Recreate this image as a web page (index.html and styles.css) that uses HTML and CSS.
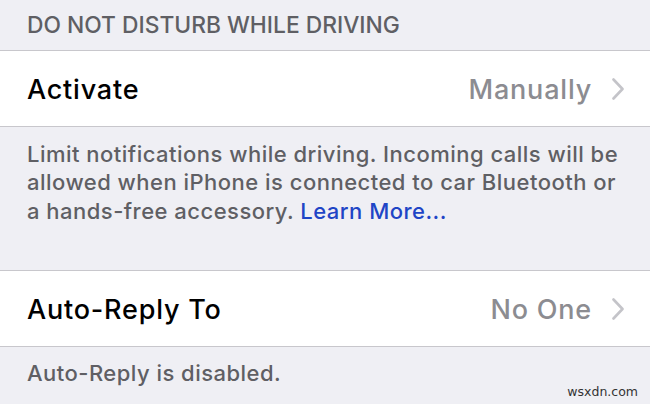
FILE: index.html
```html
<!DOCTYPE html>
<html>
<head>
<meta charset="utf-8">
<link rel="stylesheet" href="styles.css">
</head>
<body>
<div class="page">
  <div class="section-header">DO NOT DISTURB WHILE DRIVING</div>
  <div class="group">
    <div class="row">
      <span class="label">Activate</span>
      <span class="value">Manually</span>
      <svg class="chev" width="12" height="22" viewBox="0 0 12 22"><path d="M1.5 1.5 L10.5 11 L1.5 20.5" fill="none" stroke="#c4c4c9" stroke-width="2.6" stroke-linecap="round" stroke-linejoin="round"/></svg>
    </div>
  </div>
  <div class="desc">Limit notifications while driving. Incoming calls will be allowed when iPhone is connected to car Bluetooth or a hands-free accessory. <span class="link">Learn More...</span></div>
  <div class="group">
    <div class="row">
      <span class="label">Auto-Reply To</span>
      <span class="value">No One</span>
      <svg class="chev" width="12" height="22" viewBox="0 0 12 22"><path d="M1.5 1.5 L10.5 11 L1.5 20.5" fill="none" stroke="#c4c4c9" stroke-width="2.6" stroke-linecap="round" stroke-linejoin="round"/></svg>
    </div>
  </div>
  <div class="footer-note">Auto-Reply is disabled.</div>
  <div class="watermark">wsxdn.com</div>
</div>
</body>
</html>
```

FILE: styles.css
```css
html, body {
  margin: 0;
  padding: 0;
}
body {
  background: #efeff4;
  font-family: Inter, "Noto Sans", sans-serif;
}
.page {
  width: 650px;
  height: 404px;
  overflow: hidden;
  position: relative;
}
.section-header {
  height: 50px;
  box-sizing: border-box;
  padding: 13px 0 0 27px;
  font-size: 22.8px;
  font-weight: 500;
  letter-spacing: 0;
  line-height: 24px;
  color: #5f5f64;
  white-space: nowrap;
}
.group {
  background: #fff;
  border-top: 1px solid #c8c7cc;
  border-bottom: 1px solid #c8c7cc;
}
.row {
  height: 75px;
  box-sizing: border-box;
  display: flex;
  align-items: center;
  padding: 1px 26px 0 27px;
}
.label {
  font-size: 27px;
  font-weight: 500;
  letter-spacing: 0.8px;
  color: #000;
  flex: 1;
  white-space: nowrap;
}
.value {
  font-size: 27px;
  font-weight: 500;
  letter-spacing: 0.8px;
  color: #8c8c91;
  margin-right: 20px;
  white-space: nowrap;
}
.chev {
  display: block;
}
.desc {
  height: 143px;
  box-sizing: border-box;
  padding: 13px 24px 0 27px;
  font-size: 22px;
  font-weight: 500;
  line-height: 28.4px;
  letter-spacing: 0.48px;
  color: #5f5f64;
}
.link {
  color: #1f45c6;
}
.footer-note {
  padding: 12px 0 0 27px;
  font-size: 22px;
  font-weight: 500;
  line-height: 28px;
  letter-spacing: 0.47px;
  color: #5f5f64;
}
.watermark {
  position: absolute;
  right: 12px;
  bottom: 5px;
  font-family: "DejaVu Sans", Verdana, sans-serif;
  font-size: 12.5px;
  color: #333;
}
```
